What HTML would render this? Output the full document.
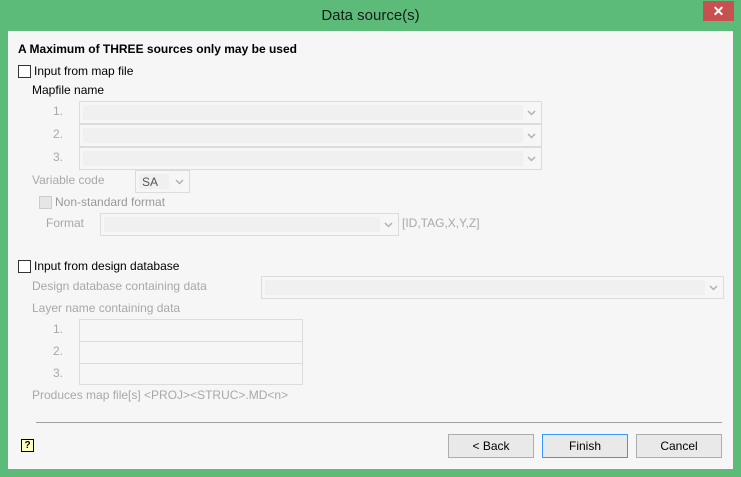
<!DOCTYPE html>
<html><head><meta charset="utf-8"><style>
body{margin:0;width:741px;height:477px;overflow:hidden;background:#5cbb78;font-family:"Liberation Sans",sans-serif;font-size:12px;position:relative}
.a{position:absolute}
.title{left:0;top:0;width:741px;height:31px;text-align:center;line-height:31px;font-size:15px;color:#1a1a1a}
.close{left:703px;top:1px;width:31px;height:20px;background:#c75050;color:#fff;text-align:center;line-height:20px;font-size:14px;font-weight:bold}
.cont{left:8px;top:31px;width:725px;height:438px;background:#f6f6f6}
.t{position:absolute;white-space:nowrap;color:#000}
.g{color:#a8a8a8}
.cb{position:absolute;width:11px;height:11px;border:1px solid #333;background:#fff}
.box{position:absolute;border:1px solid #dcdcdc;background:#f6f6f6;box-sizing:border-box}
.box i{position:absolute;left:3px;top:3px;bottom:3px;right:18px;background:#f0f0f0}
.box svg{position:absolute;right:5px;top:50%;margin-top:-3px}
.btn{position:absolute;top:434px;width:86px;height:24px;box-sizing:border-box;border:1px solid #adadad;background:#e9e9e9;text-align:center;line-height:22px;color:#000}
</style></head><body>
<div class="a title">Data source(s)</div>
<div class="a close">✕</div>
<div class="a cont"></div>
<div class="t" style="left:18px;top:42px;font-weight:bold">A Maximum of THREE sources only may be used</div>
<div class="cb" style="left:18px;top:65px"></div>
<div class="t" style="left:34px;top:64px">Input from map file</div>
<div class="t" style="left:32px;top:83px">Mapfile name</div>
<div class="t g" style="left:53px;top:104px">1.</div>
<div class="t g" style="left:53px;top:127px">2.</div>
<div class="t g" style="left:53px;top:150px">3.</div>
<div class="box" style="left:79px;top:101px;width:463px;height:23px"><i></i><svg width="9" height="6"><path d="M1 1L4.5 4.5L8 1" stroke="#b0b0b0" stroke-width="1.5" fill="none"/></svg></div>
<div class="box" style="left:79px;top:124px;width:463px;height:23px"><i></i><svg width="9" height="6"><path d="M1 1L4.5 4.5L8 1" stroke="#b0b0b0" stroke-width="1.5" fill="none"/></svg></div>
<div class="box" style="left:79px;top:147px;width:463px;height:23px"><i></i><svg width="9" height="6"><path d="M1 1L4.5 4.5L8 1" stroke="#b0b0b0" stroke-width="1.5" fill="none"/></svg></div>
<div class="t g" style="left:32px;top:173px">Variable code</div>
<div class="box" style="left:135px;top:170px;width:55px;height:23px"><i style="right:20px"></i><span class="t" style="left:6px;top:4px;color:#555">SA</span><svg width="9" height="6"><path d="M1 1L4.5 4.5L8 1" stroke="#b0b0b0" stroke-width="1.5" fill="none"/></svg></div>
<div class="cb" style="left:39px;top:196px;border-color:#ccc;background:#e6e6e6"></div>
<div class="t g" style="left:55px;top:195px;color:#999">Non-standard format</div>
<div class="t g" style="left:46px;top:216px">Format</div>
<div class="box" style="left:100px;top:213px;width:299px;height:23px"><i></i><svg width="9" height="6"><path d="M1 1L4.5 4.5L8 1" stroke="#b0b0b0" stroke-width="1.5" fill="none"/></svg></div>
<div class="t g" style="left:402px;top:216px">[ID,TAG,X,Y,Z]</div>
<div class="cb" style="left:18px;top:260px"></div>
<div class="t" style="left:34px;top:259px">Input from design database</div>
<div class="t g" style="left:32px;top:279px">Design database containing data</div>
<div class="box" style="left:261px;top:276px;width:463px;height:23px"><i></i><svg width="9" height="6"><path d="M1 1L4.5 4.5L8 1" stroke="#b0b0b0" stroke-width="1.5" fill="none"/></svg></div>
<div class="t g" style="left:32px;top:301px">Layer name containing data</div>
<div class="t g" style="left:53px;top:322px">1.</div>
<div class="t g" style="left:53px;top:344px">2.</div>
<div class="t g" style="left:53px;top:366px">3.</div>
<div class="box" style="left:79px;top:319px;width:224px;height:23px"></div>
<div class="box" style="left:79px;top:341px;width:224px;height:23px"></div>
<div class="box" style="left:79px;top:363px;width:224px;height:22px"></div>
<div class="t g" style="left:32px;top:388px">Produces map file[s] &lt;PROJ&gt;&lt;STRUC&gt;.MD&lt;n&gt;</div>
<div class="a" style="left:36px;top:422px;width:686px;height:1px;background:#a0a0a0"></div>
<div class="a" style="left:21px;top:439px;width:11px;height:11px;border:1px solid #000;background:#ffffc0;font-size:10px;font-weight:bold;line-height:11px;text-align:center">?</div>
<div class="btn" style="left:448px">&lt; Back</div>
<div class="btn" style="left:542px;border-color:#3399ff">Finish</div>
<div class="btn" style="left:636px">Cancel</div>
</body></html>
